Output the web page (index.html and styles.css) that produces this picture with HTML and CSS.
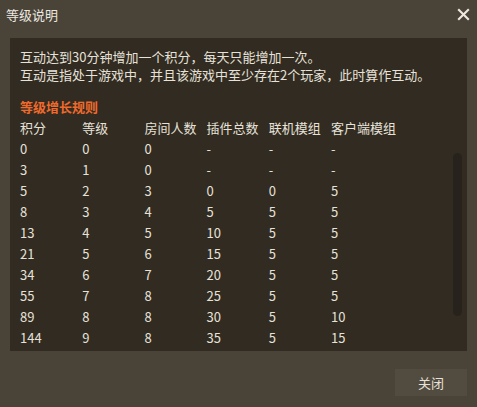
FILE: index.html
```html
<!DOCTYPE html>
<html lang="zh-CN">
<head>
<meta charset="utf-8">
<title>等级说明</title>
<link rel="stylesheet" href="styles.css">
</head>
<body>
<div class="dialog">
  <div class="titlebar">
    <span class="title">等级说明</span>
    <svg class="close" width="13" height="13" viewBox="0 0 13 13" aria-label="关闭">
      <path d="M1.2 1.2 L11.8 11.8 M11.8 1.2 L1.2 11.8" stroke="#ece8e0" stroke-width="2.1" fill="none"/>
    </svg>
  </div>
  <div class="panel">
    <div class="content">
      <p class="line">互动达到30分钟增加一个积分，每天只能增加一次。</p>
      <p class="line">互动是指处于游戏中，并且该游戏中至少存在2个玩家，此时算作互动。</p>
      <h2 class="heading">等级增长规则</h2>
      <div class="grid">
        <span>积分</span><span>等级</span><span>房间人数</span><span>插件总数</span><span>联机模组</span><span>客户端模组</span>
        <span>0</span><span>0</span><span>0</span><span>-</span><span>-</span><span>-</span>
        <span>3</span><span>1</span><span>0</span><span>-</span><span>-</span><span>-</span>
        <span>5</span><span>2</span><span>3</span><span>0</span><span>0</span><span>5</span>
        <span>8</span><span>3</span><span>4</span><span>5</span><span>5</span><span>5</span>
        <span>13</span><span>4</span><span>5</span><span>10</span><span>5</span><span>5</span>
        <span>21</span><span>5</span><span>6</span><span>15</span><span>5</span><span>5</span>
        <span>34</span><span>6</span><span>7</span><span>20</span><span>5</span><span>5</span>
        <span>55</span><span>7</span><span>8</span><span>25</span><span>5</span><span>5</span>
        <span>89</span><span>8</span><span>8</span><span>30</span><span>5</span><span>10</span>
        <span>144</span><span>9</span><span>8</span><span>35</span><span>5</span><span>15</span>
      </div>
    </div>
    <div class="track"><div class="thumb"></div></div>
  </div>
  <div class="footer">
    <button class="btn">关闭</button>
  </div>
</div>
</body>
</html>
```
FILE: styles.css
```css
html, body {
  margin: 0;
  padding: 0;
  background: #4a4438;
}
.dialog {
  width: 477px;
  height: 407px;
  background: #4a4438;
  font-family: "Noto Sans CJK SC", "Noto Sans", sans-serif;
  font-size: 13px;
  color: #e6e2da;
  display: flex;
  flex-direction: column;
}
.titlebar {
  height: 38px;
  display: flex;
  align-items: flex-start;
  justify-content: space-between;
  padding: 0 7px 0 6px;
  box-sizing: border-box;
}
.title {
  line-height: 18px;
  margin-top: 6px;
  color: #ece8e0;
}
.close {
  margin-top: 8px;
}
.panel {
  margin: 0 10px;
  height: 313px;
  background: #322b21;
  display: flex;
  box-sizing: border-box;
  overflow: hidden;
}
.content {
  flex: 1;
  padding: 10px 0 0 10px;
}
.line {
  margin: 0;
  line-height: 18px;
  white-space: nowrap;
}
.heading {
  margin: 12px 0 0;
  font-size: 13px;
  font-weight: bold;
  line-height: 21px;
  color: #ee6a2c;
}
.grid {
  display: grid;
  grid-template-columns: repeat(6, 62.2px);
  grid-auto-rows: 21px;
  line-height: 21px;
  white-space: nowrap;
}
.track {
  width: 9px;
  margin-right: 5px;
  padding-top: 115px;
}
.thumb {
  height: 163px;
  border-radius: 5px;
  background: #27221b;
}
.footer {
  flex: 1;
  display: flex;
  justify-content: flex-end;
  align-items: flex-start;
  padding: 18px 10px 0 0;
}
.btn {
  width: 72px;
  height: 27px;
  border: none;
  background: #524b40;
  color: #e6e2da;
  font-family: "Noto Sans CJK SC", "Noto Sans", sans-serif;
  font-size: 13px;
  padding: 0;
  cursor: pointer;
}
```
